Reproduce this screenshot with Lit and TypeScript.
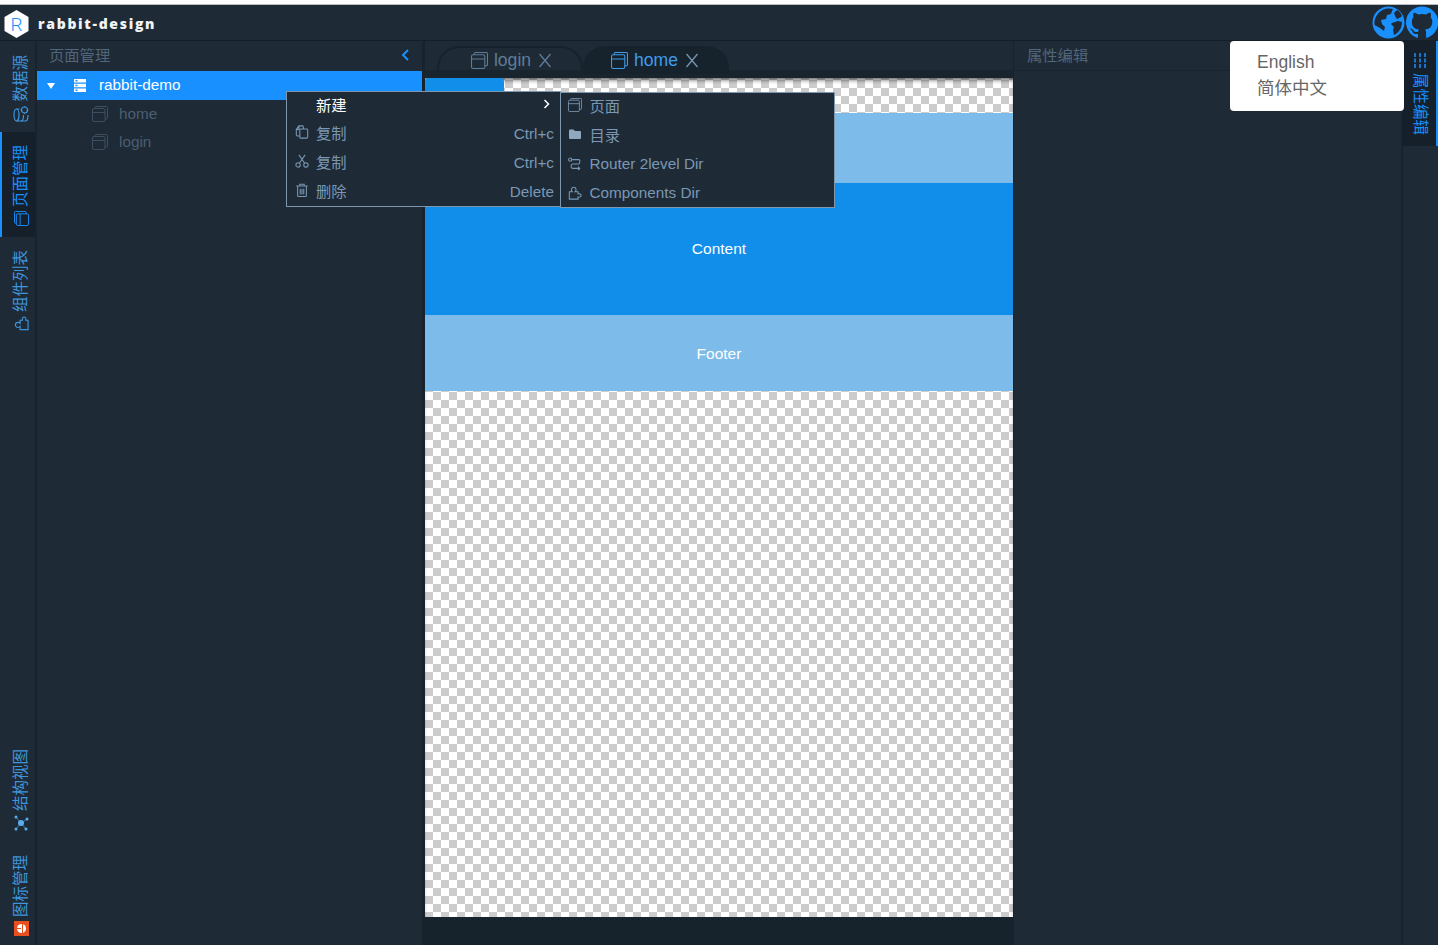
import { LitElement, html, css, svg } from 'lit';
import { customElement } from 'lit/decorators.js';

// window icon, shared by tree, tabs and menu
const pageIcon = (size = 16) => html`<svg width=${size} height=${size} viewBox="0 0 16 16" fill="none" stroke="currentColor" stroke-width="1">
  <rect x="0.5" y="2.5" width="12.5" height="13" rx="1.5"></rect>
  <path d="M0.5 6.5H13M3 2.5V1.5a1 1 0 0 1 1-1h10.5a1 1 0 0 1 1 1V12a1 1 0 0 1-1 1H13"></path>
</svg>`;

const icons = {
  db: svg`<ellipse cx="7" cy="3.5" rx="6" ry="2.5"/><path d="M1 3.5v9c0 1.4 2.7 2.5 6 2.5M13 3.5v3"/><path d="M1 8c0 1.4 2.7 2.5 6 2.5"/><circle cx="12" cy="11.500" r="3"/><path d="M12 7.500v1M12 14.500v1M8 11.500h1M15 11.500h1"/>`,
  puzzle: svg`<path d="M1.500 15V6.500h3.300c-.8-.7-1-1.400-1-2.200C3.800 2.800 5 1.500 6.500 1.500s2.700 1.300 2.700 2.800c0 .8-.3 1.500-1 2.200h3.300V9c1.800-.5 3.500.3 3.500 1.800s-1.700 2.300-3.500 1.800V15z"/>`,
  copy: svg`<rect x="5.500" y="4.500" width="9" height="10.500" rx="1"/><path d="M5.500 12.500H2.500a1 1 0 0 1-1-1V5l3-4h4a1 1 0 0 1 1 1v2.500M4.500 1v4h-3"/>`,
  cut: svg`<circle cx="3.500" cy="12.500" r="2.500"/><circle cx="12.500" cy="12.500" r="2.500"/><path d="M5 10.500 11.500 1M11 10.500 4.500 1"/>`,
  trash: svg`<path d="M1.500 3.500h13M5.500 3.500V1.500h5v2M3 3.500v11a1 1 0 0 0 1 1h8a1 1 0 0 0 1-1v-11M6 6.500v6.500M8 6.500v6.500M10 6.500v6.500"/>`,
  router: svg`<circle cx="2.500" cy="3" r="1.800"/><path d="M4.500 3h8c1.500 0 1.500 5-.5 5H5c-2 0-2 5 0 5h8M11.500 11l2 2-2 2"/>`,
};

const lineIcon = (body: unknown, size = 14) => html`<svg width=${size} height=${size} viewBox="0 0 16 16" fill="none" stroke="currentColor" stroke-width="1.200">${body}</svg>`;

const treeNodes = ['home', 'login'];

const menuRows = [
  { icon: icons.copy, label: '复制', key: 'Ctrl+c' },
  { icon: icons.cut, label: '复制', key: 'Ctrl+c' },
  { icon: icons.trash, label: '删除', key: 'Delete' },
];

@customElement('app-root')
export class AppRoot extends LitElement {
  static styles = css`
    :host {
      display: block;
      position: relative;
      width: 1438px;
      height: 945px;
      overflow: hidden;
      background: #1e2a36;
      font-family: 'Liberation Sans', 'Noto Sans CJK SC', sans-serif;
      font-size: 15.300px;
      color: #7795b0;
    }
    .topline {
      height: 5px;
      background: #fff;
      border-bottom: 1px solid #bcbcbc;
      box-sizing: border-box;
    }
    .header {
      height: 36px;
      display: flex;
      align-items: center;
      border-bottom: 1px solid #141e27;
      box-sizing: border-box;
    }
    .logo {
      margin: 2px 0 0 4px;
      display: block;
    }
    .brand {
      margin: 2px 0 0 9px;
      font-family: 'Open Sans', sans-serif;
      font-weight: 800;
      font-size: 14px;
      letter-spacing: 1.700px;
      color: #f2f4f6;
    }
    .header-icons {
      margin-left: auto;
      display: flex;
      gap: 1px;
      color: #1890ff;
    }
    .body {
      display: flex;
      height: 904px;
    }
    .rail {
      width: 35px;
      flex: none;
      display: flex;
      flex-direction: column;
      border-right: 2px solid #18232d;
      color: #3f95dc;
    }
    .rail.right {
      border-right: none;
      border-left: 2px solid #18232d;
    }
    .rail-item {
      display: flex;
      flex-direction: column;
      align-items: center;
      gap: 4px;
      padding-left: 7px;
      box-sizing: border-box;
    }
    .rail-item span {
      writing-mode: vertical-rl;
      text-orientation: sideways;
      transform: rotate(180deg);
      font-size: 15.500px;
      line-height: 18px;
    }
    .rail-item svg { transform: rotate(-90deg); }
    .rail-item.active {
      background: #15202a;
      color: #1890ff;
      box-shadow: inset 2px 0 0 #1890ff;
    }
    .rail.right .rail-item {
      padding-left: 0;
      padding-right: 1px;
      align-items: center;
    }
    .rail.right .rail-item.active {
      box-shadow: inset -2px 0 0 #1890ff;
    }
    .rail.right .rail-item span { transform: none; }
    .rail.right .rail-item svg { transform: none; }
    .spacer { flex: 1; }
    .panel {
      display: flex;
      flex-direction: column;
    }
    .panel.tree {
      width: 385px;
      flex: none;
      border-right: 3px solid #18232d;
    }
    .panel.props {
      flex: 1;
      border-left: 1px solid #18232d;
    }
    .panel-title {
      height: 30px;
      display: flex;
      align-items: center;
      justify-content: space-between;
      padding: 0 12px 4px;
      color: #51667a;
      font-size: 15.300px;
      box-sizing: border-box;
    }
    .props .panel-title {
      border-bottom: 1px solid #18232d;
      padding-left: 13px;
    }
    .collapse { color: #1890ff; display: flex; margin: 2px 0 0 0; }
    .tree-row {
      height: 28px;
      display: flex;
      align-items: center;
      color: #51667a;
    }
    .tree-row.root {
      background: #1890ff;
      color: #fff;
      height: 29px;
    }
    .caret {
      width: 0;
      height: 0;
      margin-left: 10px;
      border-left: 4.500px solid transparent;
      border-right: 4.500px solid transparent;
      border-top: 6px solid #fff;
    }
    .server { margin-left: 19px; display: block; }
    .root-label { margin: 0 0 2px 13px; }
    .tree-row.leaf { padding-left: 55px; gap: 11px; color: #4a5e71; }
    .tree-row.leaf svg { color: #3c4e60; }
    .center {
      width: 588px;
      flex: none;
      display: flex;
      flex-direction: column;
      background: #16222c;
    }
    .tabs {
      height: 37px;
      flex: none;
      display: flex;
      padding-left: 12px;
      align-items: flex-end;
      background: #1e2a36;
      box-sizing: border-box;
      border-bottom: 8px solid #18242e;
    }
    .tab {
      width: 146px;
      height: 28px;
      margin-bottom: -4px;
      padding-bottom: 1px;
      display: flex;
      align-items: center;
      justify-content: center;
      gap: 6px;
      font-size: 17.600px;
      color: #5f7c96;
      border: 2px solid #16222c;
      border-bottom: none;
      border-radius: 22px 22px 0 0;
      box-sizing: border-box;
    }
    .tab:not(.active) { padding-left: 3px; }
    .tab.active {
      background: #16222c;
      color: #3f9bec;
      padding-right: 2px;
    }
    .tab.active .x { color: #7795b0; }
    .x { margin-left: 1px; display: block; }
    .canvas {
      height: 839px;
      flex: none;
      background-color: #fff;
      background-image: conic-gradient(#ccc 25%, #fff 0 50%, #ccc 0 75%, #fff 0);
      background-size: 16px 16px;
      background-position: 0 -6px;
      box-shadow: inset 0 4px 4px -2px rgba(0, 0, 0, .6);
      display: flex;
      flex-direction: column;
    }
    .hd-block {
      width: 79px;
      height: 35px;
      background: #108ee9;
      border-radius: 4px 4px 0 0;
    }
    .band {
      display: flex;
      align-items: center;
      justify-content: center;
      color: #fff;
      font-size: 15.500px;
      box-sizing: border-box;
    }
    .band.sider { height: 70px; background: #7dbcea; }
    .band.content { height: 132px; background: #108ee9; }
    .band.footer { height: 76px; background: #7dbcea; padding-top: 2px; }

    .menu {
      position: absolute;
      background: #1e2a36;
      border: 1px solid #7f97ac;
      box-sizing: border-box;
    }
    .menu.main { left: 286px; top: 91px; width: 275px; height: 116px; }
    .menu.sub { left: 560px; top: 92px; width: 275px; height: 116px; }
    .menu-row {
      height: 29px;
      display: flex;
      align-items: center;
      padding: 0 6px 5px 8px;
      box-sizing: border-box;
      color: #7a98b3;
    }
    .main .menu-row:not(.strong) { padding-bottom: 7px; }
    .sub .menu-row:nth-child(n + 3) { padding-bottom: 4px; }
    .sub .menu-row:nth-child(-n + 2) { padding-bottom: 6px; }
    .menu-row.strong { color: #fff; }
    .menu-icon {
      width: 14px;
      height: 14px;
      display: block;
      margin-right: 7px;
      flex: none;
    }
    .sub .menu-icon { margin-right: 7.500px; margin-left: -1px; }
    .menu-key { margin: 4px 0 0 auto; }
    .chev { margin-left: auto; margin-right: 4px; display: block; }

    .lang {
      position: absolute;
      left: 1230px;
      top: 41px;
      width: 174px;
      height: 70px;
      background: #fff;
      border-radius: 4px;
      padding: 8px 27px;
      box-sizing: border-box;
      color: #666;
      font-size: 17.500px;
      line-height: 26px;
    }
  `;

  render() {
    return html`
      <div class="topline"></div>
      <div class="header">
        <svg class="logo" width="25" height="30" viewBox="0 0 25 30">
          <path d="M12.500 1 24.500 8v14l-12 7-12-7V8z" fill="#fff"></path>
          <text x="12.500" y="21.500" text-anchor="middle" font-size="19" font-weight="300" font-family="Roboto" fill="#1890ff">R</text>
        </svg>
        <div class="brand">rabbit-design</div>
        <div class="header-icons">
          <svg width="33" height="33" viewBox="0 0 33 33">
            <circle cx="16.500" cy="16.500" r="16" fill="currentColor"></circle>
            <path fill="#1e2a36" d="M5 9c-2 3-3 6-2.500 10L8 22l4 3 1-4-3-3-1-4 5-1 1-4 4-1 1-3 1-2c-4-1-11-1-16 6zM22 7l3-3c2 1 4 3 5 6l-1 1-4 2-2-3zM20 17l6-2 4 1c0 5-2 9-6 12l-2 1-1-5 1-3-3-3z"></path>
          </svg>
          <svg width="32" height="33" viewBox="0 0 32 33">
            <path fill="currentColor" d="M16 .5a16 16 0 0 0-5 31.200c.8.100 1-.3 1-.8v-3c-4.500 1-5.400-2-5.400-2-.7-1.800-1.800-2.300-1.800-2.300-1.500-1 .1-1 .1-1 1.600.1 2.500 1.700 2.500 1.700 1.400 2.500 3.800 1.800 4.700 1.400.1-1 .6-1.800 1-2.200-3.600-.4-7.300-1.800-7.300-8 0-1.700.6-3.200 1.700-4.300-.2-.4-.7-2 .2-4.300 0 0 1.300-.4 4.400 1.700a15 15 0 0 1 8 0c3-2.100 4.400-1.700 4.400-1.700.9 2.300.3 3.900.2 4.300 1 1.100 1.600 2.600 1.600 4.300 0 6.200-3.700 7.600-7.300 8 .6.500 1.100 1.500 1.100 3v4.400c0 .4.200.9 1.100.8A16 16 0 0 0 16 .5z"></path>
          </svg>
        </div>
      </div>
      <div class="body">
        ${this.renderLeftRail()}
        <div class="panel tree">
          <div class="panel-title">页面管理
            <span class="collapse"><svg width="10" height="14" viewBox="0 0 10 14" fill="none" stroke="currentColor" stroke-width="2"><path d="M8 2 3 7l5 5"></path></svg></span>
          </div>
          <div class="tree-row root">
            <span class="caret"></span>
            <svg class="server" width="12" height="13" viewBox="0 0 12 13" fill="#fff">
              <path d="M0 0h12v3.500H0zM0 4.700h12v3.500H0zM0 9.400h12v3.500H0z"></path>
              <path fill="#1890ff" d="M1.500 1h2v1.500h-2zM1.500 5.700h2v1.500h-2zM1.500 10.400h2v1.500h-2z"></path>
            </svg>
            <span class="root-label">rabbit-demo</span>
          </div>
          ${treeNodes.map((n) => html`<div class="tree-row leaf">${pageIcon(16)}<span>${n}</span></div>`)}
        </div>
        <div class="center">
          <div class="tabs">
            ${this.renderTab('login', false)}
            ${this.renderTab('home', true)}
          </div>
          <div class="canvas">
            <div class="hd-block"></div>
            <div class="band sider"></div>
            <div class="band content">Content</div>
            <div class="band footer">Footer</div>
          </div>
        </div>
        <div class="panel props">
          <div class="panel-title">属性编辑</div>
        </div>
        <div class="rail right">
          <div class="rail-item active" style="height:105px;padding-top:12px">
            <svg width="14" height="16" viewBox="0 0 14 16" fill="none" stroke="currentColor" stroke-width="1.500" stroke-dasharray="4 1.500">
              <path d="M2 0v16M7 0v16M12 0v16"></path>
            </svg>
            <span>属性编辑</span>
          </div>
        </div>
      </div>

      <div class="menu main">
        <div class="menu-row strong"><span class="menu-icon"></span>新建
          <svg class="chev" width="7" height="10" viewBox="0 0 7 10" fill="none" stroke="#fff" stroke-width="1.500"><path d="M1.500 1 5.500 5l-4 4"></path></svg>
        </div>
        ${menuRows.map((r) => html`<div class="menu-row"><span class="menu-icon">${lineIcon(r.icon)}</span>${r.label}<span class="menu-key">${r.key}</span></div>`)}
      </div>
      <div class="menu sub">
        <div class="menu-row"><span class="menu-icon">${pageIcon(14)}</span>页面</div>
        <div class="menu-row"><span class="menu-icon"><svg width="14" height="14" viewBox="0 0 14 14" fill="#8fa9c0"><path d="M1 3.500a1 1 0 0 1 1-1h3.500l1.500 1.500h5a1 1 0 0 1 1 1v6a1 1 0 0 1-1 1H2a1 1 0 0 1-1-1z"></path></svg></span>目录</div>
        <div class="menu-row"><span class="menu-icon">${lineIcon(icons.router)}</span>Router 2level Dir</div>
        <div class="menu-row"><span class="menu-icon">${lineIcon(icons.puzzle)}</span>Components Dir</div>
      </div>

      <div class="lang">
        <div>English</div>
        <div>简体中文</div>
      </div>
    `;
  }

  renderTab(name: string, active: boolean) {
    return html`<div class="tab ${active ? 'active' : ''}">
      ${pageIcon(17)}<span>${name}</span>
      <svg class="x" width="14" height="15" viewBox="0 0 14 15" fill="none" stroke="currentColor" stroke-width="1.300"><path d="M1.500 1l11 13M12.500 1l-11 13"></path></svg>
    </div>`;
  }

  renderLeftRail() {
    return html`<div class="rail">
      <div class="rail-item" style="height:91px;padding-top:14px">
        <span>数据源</span>${lineIcon(icons.db, 16)}
      </div>
      <div class="rail-item active" style="height:105px;padding-top:13px">
        <span>页面管理</span>${pageIcon(15)}
      </div>
      <div class="rail-item" style="height:100px;padding-top:13px">
        <span>组件列表</span>${lineIcon(icons.puzzle, 15)}
      </div>
      <div class="spacer"></div>
      <div class="rail-item" style="height:106px">
        <span>结构视图</span>
        <svg width="16" height="16" viewBox="0 0 16 16" fill="#5aaef0">
          <circle cx="8" cy="8" r="3"></circle><circle cx="2" cy="3" r="1.500"></circle><circle cx="14" cy="3" r="1.500"></circle><circle cx="2" cy="13" r="1.500"></circle><circle cx="12" cy="14" r="1.500"></circle>
          <path d="M2 3l6 5 6-5M2 13l6-5 4 6" stroke="#5aaef0" stroke-width=".6" fill="none"></path>
        </svg>
      </div>
      <div class="rail-item" style="height:90px">
        <span>图标管理</span>
        <svg width="15" height="15" viewBox="0 0 15 15"><rect width="15" height="15" fill="#e8501f"></rect><circle cx="7.500" cy="7.500" r="4.500" fill="#fff"></circle><path d="M7 3h1v4h-1zM3 8h9v1H3z" fill="#e8501f"></path></svg>
      </div>
    </div>`;
  }
}
